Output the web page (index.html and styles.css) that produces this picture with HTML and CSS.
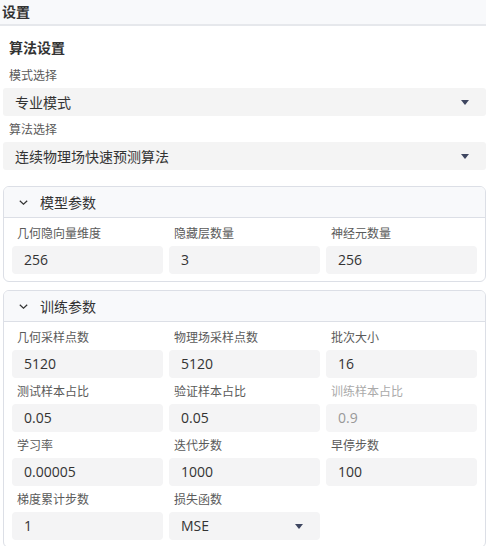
FILE: index.html
```html
<!DOCTYPE html>
<html lang="zh">
<head>
<meta charset="utf-8">
<link rel="stylesheet" href="styles.css">
</head>
<body>
<div class="topbar">设置</div>
<div class="content">
  <div class="group-title">算法设置</div>
  <div class="label top-label">模式选择</div>
  <div class="select wide"><span>专业模式</span><i class="caret"></i></div>
  <div class="label top-label second">算法选择</div>
  <div class="select wide"><span>连续物理场快速预测算法</span><i class="caret"></i></div>

  <div class="card first-card">
    <div class="card-head">
      <svg class="chev" width="9" height="5" viewBox="0 0 9 5"><polyline points="0.8,0.8 4.5,4.2 8.2,0.8" fill="none" stroke="#333" stroke-width="1.2"/></svg>
      <span>模型参数</span>
    </div>
    <div class="card-body">
      <div class="field"><div class="label">几何隐向量维度</div><div class="input">256</div></div>
      <div class="field"><div class="label">隐藏层数量</div><div class="input">3</div></div>
      <div class="field"><div class="label">神经元数量</div><div class="input">256</div></div>
    </div>
  </div>

  <div class="card">
    <div class="card-head">
      <svg class="chev" width="9" height="5" viewBox="0 0 9 5"><polyline points="0.8,0.8 4.5,4.2 8.2,0.8" fill="none" stroke="#333" stroke-width="1.2"/></svg>
      <span>训练参数</span>
    </div>
    <div class="card-body">
      <div class="field"><div class="label">几何采样点数</div><div class="input">5120</div></div>
      <div class="field"><div class="label">物理场采样点数</div><div class="input">5120</div></div>
      <div class="field"><div class="label">批次大小</div><div class="input">16</div></div>
      <div class="field"><div class="label">测试样本占比</div><div class="input">0.05</div></div>
      <div class="field"><div class="label">验证样本占比</div><div class="input">0.05</div></div>
      <div class="field disabled"><div class="label">训练样本占比</div><div class="input">0.9</div></div>
      <div class="field"><div class="label">学习率</div><div class="input">0.00005</div></div>
      <div class="field"><div class="label">迭代步数</div><div class="input">1000</div></div>
      <div class="field"><div class="label">早停步数</div><div class="input">100</div></div>
      <div class="field"><div class="label">梯度累计步数</div><div class="input">1</div></div>
      <div class="field"><div class="label">损失函数</div><div class="input select-in"><span>MSE</span><i class="caret"></i></div></div>
    </div>
  </div>
</div>
</body>
</html>
```
FILE: styles.css
```css
* { box-sizing: border-box; }
html, body { margin: 0; padding: 0; }
body {
  width: 486px;
  height: 546px;
  overflow: hidden;
  background: #fff;
  font-family: "Open Sans", "Noto Sans CJK SC", sans-serif;
  color: #333;
}
.topbar {
  height: 26px;
  line-height: 24px;
  padding-left: 2px;
  font-size: 14px;
  font-weight: bold;
  color: #333;
  background: #f8f9fb;
  border-bottom: 2px solid #e6e8ec;
}
.content {
  padding-left: 3px;
}
.group-title {
  margin-top: 12px;
  padding-left: 6px;
  font-size: 14px;
  font-weight: bold;
  line-height: 20px;
  color: #333;
}
.label {
  font-size: 12px;
  line-height: 18px;
  color: #5a5a5a;
}
.top-label {
  padding-left: 6px;
  margin-top: 9px;
  margin-bottom: 3px;
}
.top-label.second {
  margin-top: 5px;
}
.select {
  display: flex;
  align-items: center;
  justify-content: space-between;
  height: 28px;
  padding: 0 17px 0 12px;
  background: #f4f4f4;
  border-radius: 3px;
  font-size: 14px;
  color: #333;
}
.caret {
  display: block;
  width: 0;
  height: 0;
  border-left: 4px solid transparent;
  border-right: 4px solid transparent;
  border-top: 5px solid #3e4660;
}
.card {
  margin-top: 8px;
  border: 1px solid #dcdfe6;
  border-radius: 6px;
  overflow: hidden;
}
.first-card {
  margin-top: 16px;
}
.card-head {
  display: flex;
  align-items: center;
  height: 31px;
  padding-left: 12px;
  background: #f8f9fb;
  border-bottom: 1px solid #dcdfe6;
  font-size: 14px;
  color: #333;
}
.chev {
  display: block;
  margin-left: 3px;
  margin-right: 12px;
}
.card-body {
  display: grid;
  grid-template-columns: repeat(3, 151px);
  column-gap: 6px;
  row-gap: 5px;
  padding: 7px 8px 7px 8px;
}
.field .label {
  padding-left: 5px;
  margin-bottom: 3px;
}
.input {
  height: 28px;
  line-height: 28px;
  padding-left: 12px;
  background: #f4f4f5;
  border-radius: 4px;
  font-size: 14px;
  color: #333;
}
.select-in {
  display: flex;
  align-items: center;
  justify-content: space-between;
  padding-right: 17px;
}
.disabled .label { color: #aaa; }
.disabled .input { color: #999; background: #f5f5f6; }
```
